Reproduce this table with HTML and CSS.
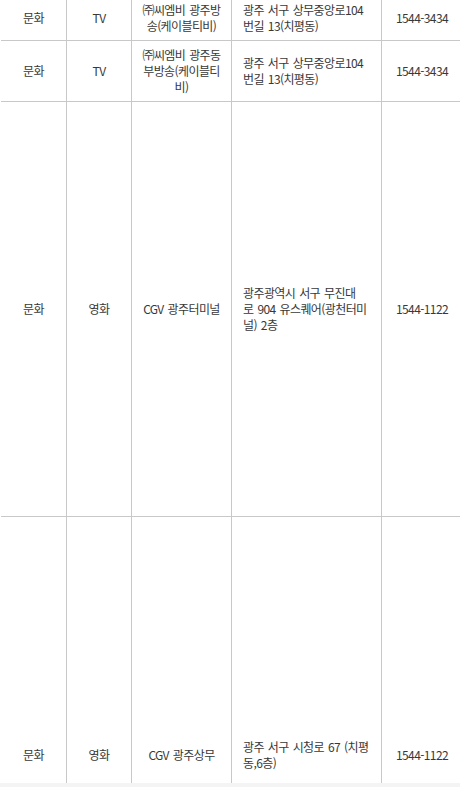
FILE: index.html
```html
<!DOCTYPE html>
<html lang="ko">
<head>
<meta charset="utf-8">
<title>문화 시설 목록</title>
<link rel="stylesheet" href="styles.css">
</head>
<body>
<div class="list">
  <div class="row r1">
    <div class="cell">문화</div>
    <div class="cell">TV</div>
    <div class="cell">㈜씨엠비 광주방<br>송(케이블티비)</div>
    <div class="cell addr">광주 서구 상무중앙로104<br>번길 13(치평동)</div>
    <div class="cell last">1544-3434</div>
  </div>
  <div class="row r2">
    <div class="cell">문화</div>
    <div class="cell">TV</div>
    <div class="cell">㈜씨엠비 광주동<br>부방송(케이블티<br>비)</div>
    <div class="cell addr">광주 서구 상무중앙로104<br>번길 13(치평동)</div>
    <div class="cell last">1544-3434</div>
  </div>
  <div class="row r3">
    <div class="cell">문화</div>
    <div class="cell">영화</div>
    <div class="cell">CGV 광주터미널</div>
    <div class="cell addr">광주광역시 서구 무진대<br>로 904 유스퀘어(광천터미<br>널) 2층</div>
    <div class="cell last">1544-1122</div>
  </div>
  <div class="row r4">
    <div class="cell">문화</div>
    <div class="cell">영화</div>
    <div class="cell">CGV 광주상무</div>
    <div class="cell addr">광주 서구 시청로 67 (치평<br>동,6층)</div>
    <div class="cell last">1544-1122</div>
  </div>
</div>
<div class="foot"></div>
</body>
</html>
```

FILE: styles.css
```css
html, body {
  margin: 0;
  padding: 0;
  background: #ffffff;
  overflow: hidden;
}
body {
  width: 460px;
  height: 787px;
  font-family: "Noto Sans CJK KR", "Noto Sans", sans-serif;
  font-size: 12px;
  line-height: 16px;
  letter-spacing: -0.6px;
  word-spacing: 1.2px;
  color: #383838;
}
.list {
  margin: -4px 0 0 1px;
  width: 461px;
}
.row {
  display: grid;
  grid-template-columns: 66px 65px 100px 150px 80px;
  border-bottom: 1px solid #c8c8c8;
  box-sizing: border-box;
}
.r1 { height: 45px; }
.r2 { height: 61px; }
.r3 { height: 415px; }
.r4 { height: 266px; border-bottom: none; }
.cell {
  display: flex;
  align-items: center;
  justify-content: center;
  text-align: center;
  border-right: 1px solid #c8c8c8;
  box-sizing: border-box;
  white-space: nowrap;
}
.cell.last { border-right: none; }
.cell.addr {
  justify-content: flex-start;
  text-align: left;
  padding-left: 11px;
}
.r4 .cell {
  padding-top: 222px;
  padding-bottom: 12px;
}
.foot {
  height: 4px;
  background: #f4f4f4;
}
```
